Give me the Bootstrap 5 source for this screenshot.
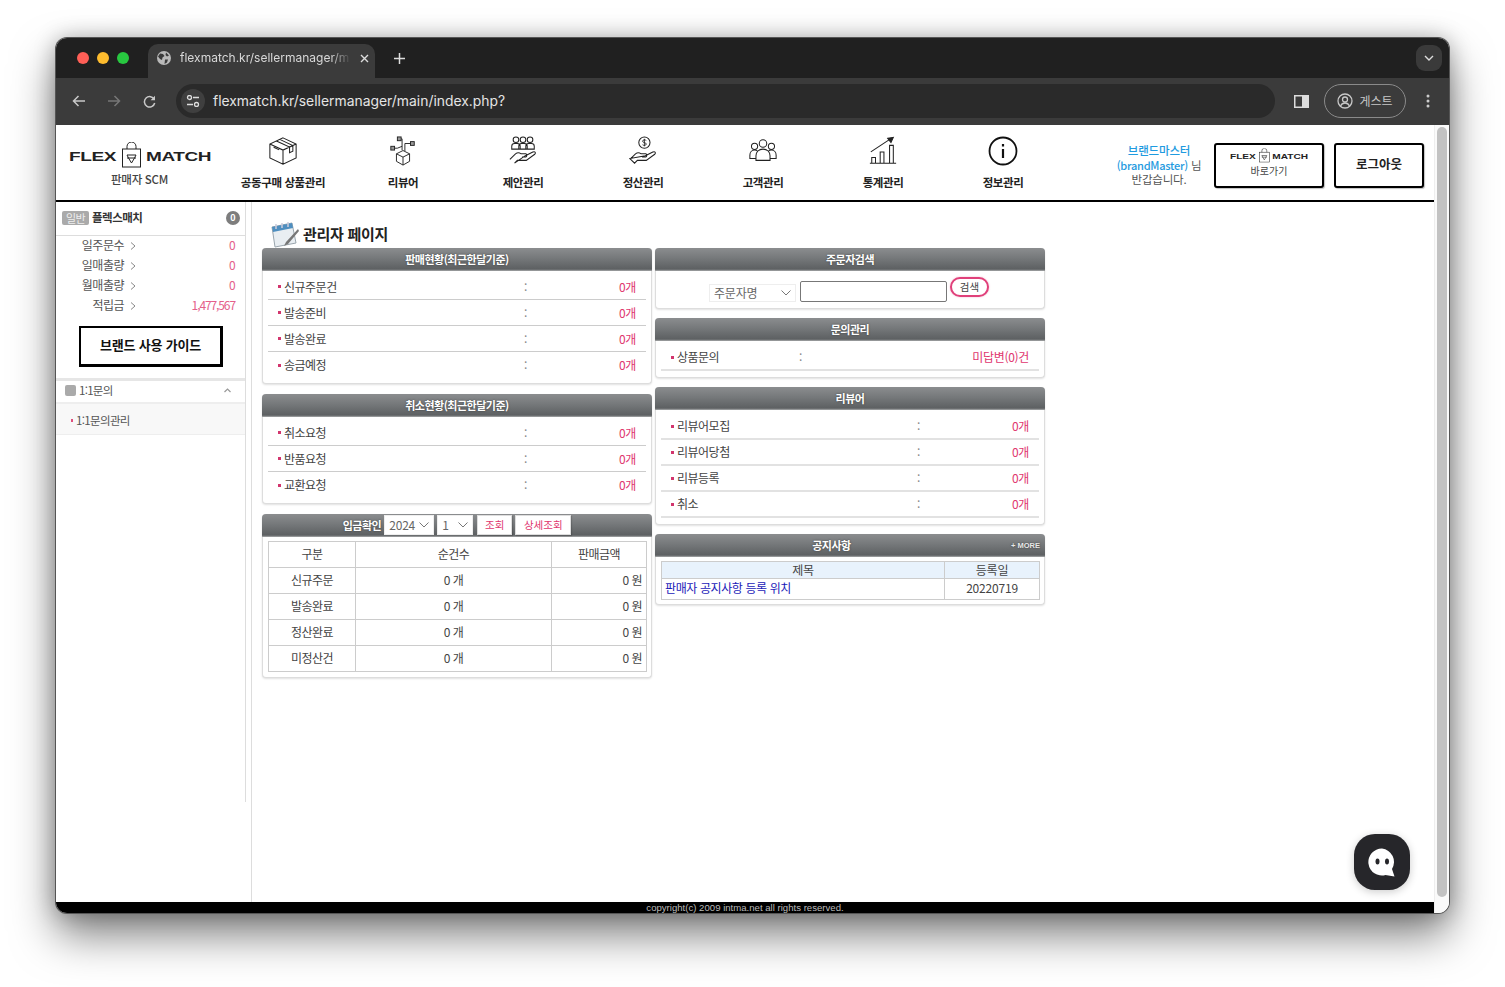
<!DOCTYPE html>
<html lang="ko">
<head>
<meta charset="utf-8">
<title>flexmatch</title>
<link href="https://cdn.jsdelivr.net/npm/bootstrap@5.3.0/dist/css/bootstrap.min.css" rel="stylesheet">
<style>
html,body{background:#fff;height:987px;overflow:hidden}
body{font-family:"Noto Sans CJK KR","Liberation Sans",sans-serif;font-size:12px;color:#444;letter-spacing:-.5px;padding:38px 0 0 56px}
svg{display:block;flex:none}
.macwin{width:1393px;height:875px;border-radius:11px;overflow:hidden;box-shadow:0 0 0 1px #555,0 22px 44px rgba(0,0,0,.5),0 0 22px rgba(0,0,0,.28);position:relative;background:#fff}
.tabstrip{height:40px;background:#202020;padding-left:21px;font-family:Inter,"Liberation Sans",sans-serif;letter-spacing:0;color:#ddd}
.dot{width:12px;height:12px;border-radius:50%}
.tab-active{width:227px;height:34px;margin:6px 0 0 19px;background:#3b3b3b;border-radius:10px 10px 0 0;padding:0 10px 6px 9px;font-size:12px;color:#d8d8d8;gap:9px}
.tab-title{white-space:nowrap;padding-right:2px;-webkit-mask-image:linear-gradient(90deg,#000 88%,transparent);mask-image:linear-gradient(90deg,#000 88%,transparent)}
.tabs-btn{width:26px;height:26px;border-radius:9px;background:#3a3a3a;margin-right:7px}
.plus{margin-left:19px}
.toolbar{height:47px;background:#3b3b3b;padding:6px 0 7px 16px;font-family:Inter,"Liberation Sans",sans-serif;letter-spacing:0;color:#e4e4e4}
.omni{width:1099px;height:34px;background:#2a2a2a;border-radius:17px;margin-left:20px;padding-left:5px;font-size:13.9px;gap:8px}
.omni-tune{width:24px;height:24px;border-radius:50%;background:#3f3f3f}
.guest{width:82px;height:34px;border:1px solid #8a8a8a;border-radius:17px;font-size:12px;gap:6px;color:#c8c8c8;margin-left:15px;margin-right:20px;font-family:"Noto Sans CJK KR",sans-serif}
.sitehead{height:77px;border-bottom:2px solid #000;flex:none}
.logo-col{width:167px;padding-top:17px;color:#444;font-size:11.5px;letter-spacing:-.3px;font-weight:500}
.nav-cell{width:120px;padding-top:11px;font-size:11.5px;font-weight:700;color:#222;text-decoration:none;letter-spacing:-.4px}
.nav-cell span{margin-top:8px;line-height:16px}
.hello{width:90px;margin-top:18px;font-size:11.5px;line-height:14.5px;color:#555;text-align:center;letter-spacing:-.2px}
.hello b{color:#1f9be0;font-weight:500}
.hello em{color:#1f9be0;font-style:normal;font-size:11px;font-weight:500;letter-spacing:-.25px}
.headbtn{height:45px;margin-top:18px;border:2px solid #000;border-radius:3px;background:#fff;color:#222;padding:0;box-shadow:1px 1px 1px rgba(0,0,0,.25)}
.btn-flex{width:110px;font-size:10px;margin-left:10px;color:#444;line-height:14px;padding-bottom:5px}
.btn-out{width:90px;font-size:12.5px;font-weight:700;margin:18px 10px 0 10px;padding-bottom:3px}
.bodywrap{flex:1;min-height:0}
.sidebar{width:190px;height:600px;border-right:1px solid #ddd;flex:none}
.gutter{width:6px;border-right:1px solid #ddd;flex:none}
.userline{height:34px;border-bottom:1px solid #ddd;padding:0 5px 1px 6px;font-weight:700;font-size:11.5px;color:#333;gap:3px}
.lvl{background:#aaa;color:#eee;border-radius:2px;width:27px;height:14px;line-height:14px;font-weight:400;font-size:11px;text-align:center}
.zero{width:14px;height:14px;border-radius:50%;background:#7d7d7d;color:#fff;font-size:9px;line-height:14px;text-align:center;font-weight:700;letter-spacing:0}
.statlist{margin-top:-1px}
.statrow{height:20px;line-height:20px;font-size:12px;color:#555}
.statname{width:68px;text-align:right}
.statrow svg{margin:7px 0 0 6px}
.statval{margin-left:auto;padding-right:10px;color:#e4608a;letter-spacing:-.6px}
.statval-long{letter-spacing:-1.1px}
.guide{width:144px;height:41px;margin:11px 0 11px 23px;border:2px solid #000;border-right-width:3px;border-bottom-width:3px;font-weight:700;font-size:13px;color:#111;line-height:34px;text-align:center;background:#fff;letter-spacing:-.2px}
.secthead{height:26px;border-top:3px solid #e6e6e6;border-bottom:2px solid #eee;padding:0 14px 2px 9px;color:#555;font-size:11.5px;gap:3px;letter-spacing:-.7px}
.sq{width:11px;height:11px;background:#aaa;border-radius:2px}
.subitem{height:31px;background:#f8f8f8;border-bottom:1px solid #eee;padding:3px 0 0 15px;font-size:11.5px;color:#555;gap:3px;letter-spacing:-.65px}
.subitem i{width:2px;height:3px;background:#e0507e}
.mainpane{flex:1;padding:0 0 0 10px;min-width:0}
.pagetitle{height:46px;padding:19px 0 0 7px;font-size:15px;font-weight:700;color:#222;gap:4px;letter-spacing:-.3px;line-height:26px}
.colset{gap:3px;align-items:flex-start}
.stack{width:390px;gap:10px}
.stack-r{gap:9px}
.pane{border:1px solid #ddd;border-top:0;border-radius:4px;box-shadow:0 1px 2px rgba(0,0,0,.12);background:#fff;margin:0}
.panehead{height:23px;margin:0 -1px;background:linear-gradient(#8b8d8f,#75787a 45%,#5d6062 92%,#a9abac);border-radius:4px 4px 0 0;color:#fff;font-weight:700;font-size:11px;text-shadow:0 0 2px rgba(0,0,0,.5);letter-spacing:-.5px;position:relative;gap:3px;padding-bottom:1px}
.notice-head{padding-right:37px}
.more{position:absolute;right:5px;top:7px;font-family:"Liberation Sans",sans-serif;font-size:7.5px;line-height:9px;color:#e8e8e8;letter-spacing:0;font-weight:700}
.panebody{padding:3px 5px 7px}
.datarow{height:26px;border-bottom:1px solid #ccc;padding:0 10px;color:#444}
.datarow:last-child{border-bottom:0}
.lines-soft{padding-top:4px}
.lines-soft .datarow,.lines-soft .datarow:last-child{border-bottom:2px solid #e2e2e2;padding-bottom:0}
.rowlabel{width:246px;gap:3px}
.rowlabel i{width:3px;height:3px;background:#d2356d}
.rowsep{color:#888;letter-spacing:0}
.rowval{margin-left:auto;color:#e0356e;letter-spacing:-.3px}
.short .rowlabel{width:128px}
.searchline{height:38px;gap:4px;padding:0 0 0 53px;align-items:flex-start}
.miniselect{height:18px;border:1px solid #eee;border-radius:0;padding:0 0 0 4px;background-image:url("data:image/svg+xml,%3csvg xmlns='http://www.w3.org/2000/svg' viewBox='0 0 10 6'%3e%3cpath fill='none' stroke='%23777' d='M.5.5L5 5 9.500.5'/%3e%3c/svg%3e");background-position:right 4px center;background-size:10px 6px;font-size:12px;color:#666;box-shadow:none;letter-spacing:-.2px;font-family:inherit;line-height:16px;text-shadow:none}
.s-name{width:87px;margin-top:13px}
.s-input{width:147px;height:21px;margin-top:10px;border:1px solid #777;border-radius:2px;padding:0}
.s-btn{width:39px;height:20px;margin-top:6px;margin-left:-1px;border:2px solid #e0407a;border-radius:10px;background:#fff;padding:0;font-size:10.5px;color:#444;line-height:14px;box-shadow:0 0 2px rgba(224,64,122,.4)}
.s-y{width:50px;height:20px;background-color:#fff}
.s-m{width:36px;height:20px;background-color:#fff}
.pinkbtn{height:20px;background:#fff;border:1px solid #ddd;border-radius:0;font-size:10.5px;color:#e0356e;padding:0;line-height:16px;box-shadow:1px 1px 1px rgba(0,0,0,.15);text-shadow:none}
.pb1{width:35px;margin-left:1px}
.pb2{width:56px}
.tablewrap{padding:4px 5px 6px}
.gridtable{margin:0;width:378px;table-layout:fixed;border-color:#ccc;color:#444;font-size:12px}
.gridtable td,.gridtable th{padding:0 4px 2px;height:26px;vertical-align:middle;font-weight:400;border-color:#ccc;color:#444;text-align:center}
.gridtable .num{text-align:right}
.noticewrap{padding:4px 5px 5px}
.noticetable{margin:0;width:378px;table-layout:fixed;font-size:12px;color:#444;border-color:#ccc}
.noticetable td{padding:0 4px 2px;vertical-align:middle;border-color:#ccc;text-align:center;color:#444;letter-spacing:-.2px}
.noticetable .headrow td{height:17px;background:#e8f2fc;line-height:14px;padding:0 0 1px}
.noticetable .inforow td{height:21px}
.noticetable .linkcell{text-align:left;color:#1a1ab8;font-weight:400;letter-spacing:-.4px;padding-left:3px}
.sitefoot{height:11px;background:#000;color:#bbb;font-family:"Liberation Sans",sans-serif;font-size:9.6px;line-height:11px;text-align:center;letter-spacing:0;flex:none}
.scrolltrack{width:15px;background:#fafafa;border-left:1px solid #eee;padding:2px 2px 16px 2px;flex:none}
.scrollthumb{height:100%;background:#c2c2c2;border-radius:5px}
.chatfab{position:absolute;left:1298px;top:796px;width:56px;height:56px;border-radius:21px;background:#26262a;box-shadow:0 2px 8px rgba(0,0,0,.2)}
</style>
</head>
<body>
<svg width="0" height="0" style="position:absolute">
<defs>
<symbol id="brandmark" viewBox="0 0 142 26">
<text x="0" y="19" font-family="Liberation Sans" font-weight="700" font-size="13" textLength="47" lengthAdjust="spacingAndGlyphs" fill="#222">FLEX</text>
<g fill="none" stroke="#222" stroke-width="1">
<rect x="53.500" y="7" width="18" height="18"/>
<path d="M58 7V4.500a4.500 4.500 0 0 1 9 0V7"/>
<path d="M58 13h9l-1.500 3-3 5-3-5zM58 16h9"/>
</g>
<text x="77" y="19" font-family="Liberation Sans" font-weight="700" font-size="13" textLength="65" lengthAdjust="spacingAndGlyphs" fill="#222">MATCH</text>
</symbol>
</defs>
</svg>

<div class="macwin d-flex flex-column">
  <div class="tabstrip d-flex align-items-center flex-none">
    <div class="d-flex gap-2">
      <div class="dot" style="background:#ff5f57"></div>
      <div class="dot" style="background:#febc2e"></div>
      <div class="dot" style="background:#28c840"></div>
    </div>
    <div class="tab-active d-flex align-items-center align-self-start">
      <svg width="14" height="14" viewBox="0 0 14 14"><circle cx="7" cy="7" r="7" fill="#b9b9b9"/><path d="M3 2.500l3 .5 1.500 2-2 1.500-.5 2.500-2-1-2-2.500zM9 1.500l3 3-2 1-1.500-1.500zM8 8.500h3l-1 3-2.500 1.500z" fill="#3b3b3b"/></svg>
      <span class="tab-title">flexmatch.kr/sellermanager/m</span>
      <svg class="ms-auto" width="9" height="9" viewBox="0 0 9 9"><path d="M1 1l7 7M8 1l-7 7" stroke="#ddd" stroke-width="1.400"/></svg>
    </div>
    <svg class="plus" width="11" height="11" viewBox="0 0 11 11"><path d="M5.500 0v11M0 5.500h11" stroke="#ddd" stroke-width="1.500"/></svg>
    <div class="tabs-btn ms-auto d-flex align-items-center justify-content-center">
      <svg width="10" height="6" viewBox="0 0 10 6"><path d="M1 1l4 4 4-4" fill="none" stroke="#ddd" stroke-width="1.400"/></svg>
    </div>
  </div>

  <div class="toolbar d-flex align-items-center flex-none">
    <svg width="14" height="12" viewBox="0 0 14 12"><path d="M13 6H1.500M6.500 1l-5 5 5 5" fill="none" stroke="#c9c9c9" stroke-width="1.500"/></svg>
    <svg style="margin-left:21px" width="14" height="12" viewBox="0 0 14 12"><path d="M1 6h11.500M7.500 1l5 5-5 5" fill="none" stroke="#777" stroke-width="1.500"/></svg>
    <svg style="margin-left:22px" width="13" height="13" viewBox="0 0 13 13"><path d="M11.300 4.500A5.200 5.200 0 1 0 11.700 8" fill="none" stroke="#c9c9c9" stroke-width="1.500"/><path d="M12 .8v4.400H7.600z" fill="#c9c9c9"/></svg>
    <div class="omni d-flex align-items-center">
      <div class="omni-tune d-flex align-items-center justify-content-center">
        <svg width="14" height="12" viewBox="0 0 14 12"><g fill="none" stroke="#ddd" stroke-width="1.300"><circle cx="3.500" cy="2.500" r="2"/><path d="M7 2.500h6M1 9.500h6"/><circle cx="10.500" cy="9.500" r="2"/></g></svg>
      </div>
      <span>flexmatch.kr/sellermanager/main/index.php?</span>
    </div>
    <svg style="margin-left:19px" width="15" height="13" viewBox="0 0 15 13"><rect x=".75" y=".75" width="13.500" height="11.500" fill="none" stroke="#ddd" stroke-width="1.500"/><rect x="8" y="1" width="6" height="11" fill="#ddd"/></svg>
    <div class="guest d-flex align-items-center justify-content-center">
      <svg width="16" height="16" viewBox="0 0 16 16"><g fill="none" stroke="#c8c8c8" stroke-width="1.300"><circle cx="8" cy="8" r="7"/><circle cx="8" cy="6.500" r="2.500"/><path d="M3.500 13c1-2.200 2.500-3 4.500-3s3.500.8 4.500 3"/></g></svg>
      <span>게스트</span>
    </div>
    <svg width="4" height="14" viewBox="0 0 4 14"><g fill="#ccc"><circle cx="2" cy="2" r="1.500"/><circle cx="2" cy="7" r="1.500"/><circle cx="2" cy="12" r="1.500"/></g></svg>
  </div>

  <div class="d-flex flex-grow-1" style="min-height:0">
    <div class="d-flex flex-column flex-grow-1" style="min-width:0">
      <header class="sitehead d-flex align-items-start">
        <div class="logo-col d-flex flex-column align-items-center">
          <svg width="142" height="26"><use href="#brandmark"/></svg>
          <span style="margin-top:3px">판매자 SCM</span>
        </div>
        <a class="nav-cell d-flex flex-column align-items-center" href="#">
          <svg width="30" height="30" viewBox="0 0 32 32" fill="none" stroke="#222" stroke-width="1.100"><path d="M16 2l14 6.500v15L16 30 2 23.500v-15zM2 8.500L16 15l14-6.500M16 15v15M9 5.300l14 6.500v6l3.500-1.700v-6L12.500 3.600M6 12l6 2.800"/></svg>
          <span>공동구매 상품관리</span>
        </a>
        <a class="nav-cell d-flex flex-column align-items-center" href="#">
          <svg width="30" height="30" viewBox="0 0 32 32" fill="none" stroke="#222" stroke-width="1"><path d="M9 19l7-3.500 7 3.500v8l-7 4-7-4zM9 19l7 3.500 7-3.500M16 22.500V31M15 15V3h-1M15 11l-5 2H7M18 16V8h6"/><rect x="10" y="1" width="4" height="4" fill="#999"/><rect x="3" y="11" width="4" height="4" fill="#999"/><rect x="24" y="6" width="4" height="4" fill="#999"/></svg>
          <span>리뷰어</span>
        </a>
        <a class="nav-cell d-flex flex-column align-items-center" href="#">
          <svg width="30" height="30" viewBox="0 0 32 32" fill="none" stroke="#222" stroke-width="1.100"><circle cx="8.500" cy="4" r="3"/><circle cx="16" cy="4" r="3"/><circle cx="23.500" cy="4" r="3"/><path d="M4 14v-3a3 3 0 0 1 3-3h3a3 3 0 0 1 3 3v3zM11.500 14v-3a3 3 0 0 1 3-3h3a3 3 0 0 1 3 3v3zM19 14v-3a3 3 0 0 1 3-3h3a3 3 0 0 1 3 3v3zM2 25l6-6c2-1.500 4-1.500 6 0h5a2 2 0 0 1 0 3.500h-4M18.500 21l8-4c2.500-1 3.500 1 2 2.500l-9 6.500H10l-3 3z"/></svg>
          <span>제안관리</span>
        </a>
        <a class="nav-cell d-flex flex-column align-items-center" href="#">
          <svg width="30" height="30" viewBox="0 0 32 32" fill="none" stroke="#222" stroke-width="1.100"><circle cx="17.500" cy="7" r="6"/><path d="M19.500 4.800c-1-1-4-1-4 .8s4 1 4 3c0 1.700-3 1.800-4 .7M17.500 3v8" stroke-width=".9"/><path d="M2 25l6-6c2-1.500 4-1.500 6 0h5a2 2 0 0 1 0 3.500h-4M18.500 21l8-4c2.500-1 3.500 1 2 2.500l-9 6.500H10l-3 3-5-5z"/></svg>
          <span>정산관리</span>
        </a>
        <a class="nav-cell d-flex flex-column align-items-center" href="#">
          <svg width="30" height="30" viewBox="0 0 32 32" fill="none" stroke="#222" stroke-width="1.100"><circle cx="16" cy="8" r="4"/><circle cx="7" cy="11" r="3.300"/><circle cx="25" cy="11" r="3.300"/><path d="M8.500 26v-5c0-4 3-7 7.500-7s7.500 3 7.500 7v5zM8.500 24H2v-3.500c0-3 2-5.500 5-5.500 1.500 0 2.500.5 3.500 1.300M23.500 24H30v-3.500c0-3-2-5.500-5-5.500-1.500 0-2.500.5-3.500 1.300"/></svg>
          <span>고객관리</span>
        </a>
        <a class="nav-cell d-flex flex-column align-items-center" href="#">
          <svg width="30" height="30" viewBox="0 0 32 32" fill="none" stroke="#222" stroke-width="1.100"><path d="M2 29h28M4 29v-6h4v6M13 29V17h4v12M23 29V10h4v19M3 17L24 3"/><path d="M21 2.500l6-1-2.500 5.500z" fill="#222"/></svg>
          <span>통계관리</span>
        </a>
        <a class="nav-cell d-flex flex-column align-items-center" href="#">
          <svg width="30" height="30" viewBox="0 0 30 30" fill="none" stroke="#111" stroke-width="1.800"><circle cx="15" cy="15" r="13.500"/><path d="M15 13v9M15 8v2.500" stroke-width="2.200"/></svg>
          <span>정보관리</span>
        </a>
        <div class="hello ms-auto"><b>브랜드마스터</b><br><em>(brandMaster)</em> 님<br>반갑습니다.</div>
        <button class="headbtn btn-flex d-flex flex-column align-items-center justify-content-center" type="button">
          <svg width="78" height="15" viewBox="0 0 142 26"><use href="#brandmark"/></svg>
          <span style="margin-top:1px">바로가기</span>
        </button>
        <button class="headbtn btn-out" type="button">로그아웃</button>
      </header>

      <div class="bodywrap d-flex">
        <aside class="sidebar">
          <div class="userline d-flex align-items-center">
            <span class="lvl">일반</span><span>플렉스매치</span><span class="zero ms-auto">0</span>
          </div>
          <div class="statlist">
            <div class="statrow d-flex"><span class="statname">일주문수</span><svg width="6" height="8" viewBox="0 0 6 8"><path d="M1 .5L5 4 1 7.500" fill="none" stroke="#888"/></svg><span class="statval">0</span></div>
            <div class="statrow d-flex"><span class="statname">일매출량</span><svg width="6" height="8" viewBox="0 0 6 8"><path d="M1 .5L5 4 1 7.500" fill="none" stroke="#888"/></svg><span class="statval">0</span></div>
            <div class="statrow d-flex"><span class="statname">월매출량</span><svg width="6" height="8" viewBox="0 0 6 8"><path d="M1 .5L5 4 1 7.500" fill="none" stroke="#888"/></svg><span class="statval">0</span></div>
            <div class="statrow d-flex"><span class="statname">적립금</span><svg width="6" height="8" viewBox="0 0 6 8"><path d="M1 .5L5 4 1 7.500" fill="none" stroke="#888"/></svg><span class="statval statval-long">1,477,567</span></div>
          </div>
          <div class="guide">브랜드 사용 가이드</div>
          <div class="secthead d-flex align-items-center">
            <span class="sq"></span><span>1:1문의</span>
            <svg class="ms-auto" width="7" height="5" viewBox="0 0 7 5"><path d="M.5 4l3-3 3 3" fill="none" stroke="#999" stroke-width="1.200"/></svg>
          </div>
          <div class="subitem d-flex align-items-center"><i></i><span>1:1문의관리</span></div>
        </aside>
        <div class="gutter"></div>
        <main class="mainpane">
          <div class="pagetitle d-flex align-items-start">
            <svg width="30" height="27" viewBox="0 0 30 27"><path d="M3 6l20-4 4 20-21 4z" fill="#e9eef2" stroke="#9aa5ad"/><path d="M3 6l20-4 1 5-20 4z" fill="#4f8fc0"/><path d="M7 3v5M13 2v5M19 1v5" stroke="#ccd" stroke-width="1.500"/><path d="M29 8L17 21l-2 4 4-2L30 10z" fill="#777"/></svg>
            <span>관리자 페이지</span>
          </div>
          <div class="colset d-flex">
            <div class="stack d-flex flex-column">
              <section class="pane" style="height:136px">
                <div class="panehead d-flex align-items-center justify-content-center">판매현황(최근한달기준)</div>
                <div class="panebody">
                  <div class="datarow d-flex align-items-center"><span class="rowlabel d-flex align-items-center"><i></i>신규주문건</span><span class="rowsep">:</span><span class="rowval">0개</span></div>
                  <div class="datarow d-flex align-items-center"><span class="rowlabel d-flex align-items-center"><i></i>발송준비</span><span class="rowsep">:</span><span class="rowval">0개</span></div>
                  <div class="datarow d-flex align-items-center"><span class="rowlabel d-flex align-items-center"><i></i>발송완료</span><span class="rowsep">:</span><span class="rowval">0개</span></div>
                  <div class="datarow d-flex align-items-center"><span class="rowlabel d-flex align-items-center"><i></i>송금예정</span><span class="rowsep">:</span><span class="rowval">0개</span></div>
                </div>
              </section>
              <section class="pane" style="height:110px">
                <div class="panehead d-flex align-items-center justify-content-center">취소현황(최근한달기준)</div>
                <div class="panebody">
                  <div class="datarow d-flex align-items-center"><span class="rowlabel d-flex align-items-center"><i></i>취소요청</span><span class="rowsep">:</span><span class="rowval">0개</span></div>
                  <div class="datarow d-flex align-items-center"><span class="rowlabel d-flex align-items-center"><i></i>반품요청</span><span class="rowsep">:</span><span class="rowval">0개</span></div>
                  <div class="datarow d-flex align-items-center"><span class="rowlabel d-flex align-items-center"><i></i>교환요청</span><span class="rowsep">:</span><span class="rowval">0개</span></div>
                </div>
              </section>
              <section class="pane" style="height:164px">
                <div class="panehead d-flex align-items-center justify-content-center">
                  <span>입금확인</span>
                  <select class="form-select miniselect s-y"><option>2024</option></select>
                  <select class="form-select miniselect s-m"><option>1</option></select>
                  <button class="pinkbtn pb1" type="button">조회</button>
                  <button class="pinkbtn pb2" type="button">상세조회</button>
                </div>
                <div class="tablewrap">
                  <table class="table table-bordered gridtable">
                    <colgroup><col style="width:87px"><col style="width:196px"><col style="width:95px"></colgroup>
                    <tbody>
                      <tr><td>구분</td><td>순건수</td><td>판매금액</td></tr>
                      <tr><td>신규주문</td><td>0 개</td><td class="num">0 원</td></tr>
                      <tr><td>발송완료</td><td>0 개</td><td class="num">0 원</td></tr>
                      <tr><td>정산완료</td><td>0 개</td><td class="num">0 원</td></tr>
                      <tr><td>미정산건</td><td>0 개</td><td class="num">0 원</td></tr>
                    </tbody>
                  </table>
                </div>
              </section>
            </div>
            <div class="stack stack-r d-flex flex-column">
              <section class="pane" style="height:61px">
                <div class="panehead d-flex align-items-center justify-content-center">주문자검색</div>
                <div class="searchline d-flex">
                  <select class="form-select miniselect s-name"><option>주문자명</option></select>
                  <input class="form-control s-input" type="text" aria-label="주문자명">
                  <button class="s-btn" type="button">검색</button>
                </div>
              </section>
              <section class="pane" style="height:60px">
                <div class="panehead d-flex align-items-center justify-content-center">문의관리</div>
                <div class="panebody lines-soft short">
                  <div class="datarow d-flex align-items-center"><span class="rowlabel d-flex align-items-center"><i></i>상품문의</span><span class="rowsep">:</span><span class="rowval">미답변(0)건</span></div>
                </div>
              </section>
              <section class="pane" style="height:138px">
                <div class="panehead d-flex align-items-center justify-content-center">리뷰어</div>
                <div class="panebody lines-soft">
                  <div class="datarow d-flex align-items-center"><span class="rowlabel d-flex align-items-center"><i></i>리뷰어모집</span><span class="rowsep">:</span><span class="rowval">0개</span></div>
                  <div class="datarow d-flex align-items-center"><span class="rowlabel d-flex align-items-center"><i></i>리뷰어당첨</span><span class="rowsep">:</span><span class="rowval">0개</span></div>
                  <div class="datarow d-flex align-items-center"><span class="rowlabel d-flex align-items-center"><i></i>리뷰등록</span><span class="rowsep">:</span><span class="rowval">0개</span></div>
                  <div class="datarow d-flex align-items-center"><span class="rowlabel d-flex align-items-center"><i></i>취소</span><span class="rowsep">:</span><span class="rowval">0개</span></div>
                </div>
              </section>
              <section class="pane" style="height:71px">
                <div class="panehead notice-head d-flex align-items-center justify-content-center">공지사항<span class="more">+ MORE</span></div>
                <div class="noticewrap">
                  <table class="table table-bordered noticetable">
                    <colgroup><col style="width:283px"><col style="width:95px"></colgroup>
                    <tbody>
                      <tr class="headrow"><td>제목</td><td>등록일</td></tr>
                      <tr class="inforow"><td class="linkcell">판매자 공지사항 등록 위치</td><td>20220719</td></tr>
                    </tbody>
                  </table>
                </div>
              </section>
            </div>
          </div>
        </main>
      </div>
      <footer class="sitefoot">copyright(c) 2009 intma.net all rights reserved.</footer>
    </div>
    <div class="scrolltrack"><div class="scrollthumb"></div></div>
  </div>

  <div class="chatfab d-flex align-items-center justify-content-center">
    <svg width="31" height="31" viewBox="0 0 31 31"><path d="M15 1.500a13.500 13.500 0 1 0 3.500 26.500l9 1.500-2.500-7.500A13.500 13.500 0 0 0 15 1.500z" fill="#fff"/><ellipse cx="10.500" cy="14.500" rx="2" ry="3" fill="#26262a"/><ellipse cx="20" cy="14.500" rx="2" ry="3" fill="#26262a"/></svg>
  </div>
</div>
</body>
</html>
